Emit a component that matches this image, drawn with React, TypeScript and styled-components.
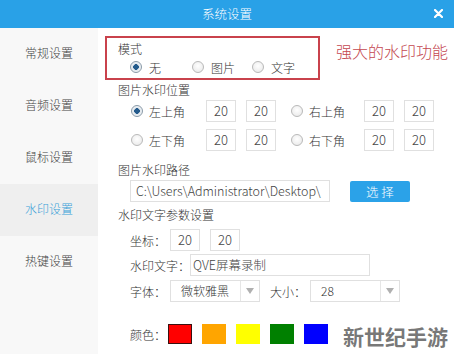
import * as React from 'react';
import styled, { createGlobalStyle, css } from 'styled-components';

const GlobalStyle = createGlobalStyle`
  html, body {
    margin: 0;
    padding: 0;
    background: #fff;
  }
  body {
    font-family: "Noto Sans CJK SC", "Noto Sans", sans-serif;
    font-size: 12px;
    font-weight: 300;
    color: #333;
  }
`;

const navItems = ['常规设置', '音频设置', '鼠标设置', '水印设置', '热键设置'];
const swatches = ['#ff0000', '#ffa500', '#ffff00', '#008000', '#0000ff'];

const App = () => {
  return <Window>
    <GlobalStyle />
    <TitleBar>
      系统设置
      <CloseButton>
        <svg width="9" height="9" viewBox="0 0 9 9">
          <path d="M1 1 L8 8 M8 1 L1 8" stroke="#fff" strokeWidth="2.2" strokeLinecap="round" />
        </svg>
      </CloseButton>
    </TitleBar>
    <Body>
      <Sidebar>
        {navItems.map((name) => (
          <NavItem key={name} active={name === '水印设置'}>{name}</NavItem>
        ))}
      </Sidebar>
      <Main>
        <ModeRow>
          <ModeBox>
            <Heading>模式</Heading>
            <RadioRow>
              <Option width={62}><Radio checked />无</Option>
              <Option width={60}><Radio />图片</Option>
              <Option><Radio />文字</Option>
            </RadioRow>
          </ModeBox>
          <Annotation>强大的水印功能</Annotation>
        </ModeRow>

        <Heading top={2}>图片水印位置</Heading>
        <PosRow top={2}>
          <PosLabel><Radio checked />左上角</PosLabel>
          <NumBox>20</NumBox>
          <NumBox>20</NumBox>
          <PosLabel right><Radio />右上角</PosLabel>
          <NumBox>20</NumBox>
          <NumBox>20</NumBox>
        </PosRow>
        <PosRow top={7}>
          <PosLabel><Radio />左下角</PosLabel>
          <NumBox>20</NumBox>
          <NumBox>20</NumBox>
          <PosLabel right><Radio />右下角</PosLabel>
          <NumBox>20</NumBox>
          <NumBox>20</NumBox>
        </PosRow>

        <Heading top={11}>图片水印路径</Heading>
        <PathRow>
          <PathInput>C:\Users\Administrator\Desktop\</PathInput>
          <BlueButton>选 择</BlueButton>
        </PathRow>

        <Heading top={5}>水印文字参数设置</Heading>
        <FieldRow top={6}>
          <FieldLabel width={40}>坐标：</FieldLabel>
          <NumBox>20</NumBox>
          <NumBox>20</NumBox>
        </FieldRow>
        <FieldRow top={3}>
          <FieldLabel width={60}>水印文字：</FieldLabel>
          <TextBox>QVE屏幕录制</TextBox>
        </FieldRow>
        <FieldRow top={4}>
          <FieldLabel width={40}>字体：</FieldLabel>
          <Select>
            <SelectValue>微软雅黑</SelectValue>
            <SelectArrow />
          </Select>
          <FieldLabel width={40}>大小：</FieldLabel>
          <Select>
            <SelectValue>28</SelectValue>
            <SelectArrow />
          </Select>
        </FieldRow>
        <FieldRow top={22}>
          <FieldLabel width={38}>颜色：</FieldLabel>
          <Swatches>
            {swatches.map((c, i) => (
              <Swatch key={c} color={c} selected={i === 0} />
            ))}
          </Swatches>
        </FieldRow>
      </Main>
    </Body>
    <SiteMark>新世纪手游</SiteMark>
  </Window>;
};

const Window = styled.div`
  position: relative;
  width: 454px;
  height: 354px;
  overflow: hidden;
  display: flex;
  flex-direction: column;
`;

const TitleBar = styled.div`
  position: relative;
  flex: none;
  height: 28px;
  line-height: 27px;
  background: #29a1e7;
  color: #fff;
  font-size: 12.5px;
  text-align: center;
`;

const CloseButton = styled.div`
  position: absolute;
  right: 11px;
  top: 9px;
  width: 9px;
  height: 9px;
  display: flex;
`;

const Body = styled.div`
  flex: 1 1 auto;
  display: flex;
`;

const Sidebar = styled.div`
  flex: none;
  width: 98px;
  background: #f8f8f8;
  display: flex;
  flex-direction: column;
`;

const NavItem = styled.div<{ active?: boolean }>`
  height: 52px;
  padding-bottom: 4px;
  box-sizing: border-box;
  display: flex;
  align-items: center;
  justify-content: center;
  font-size: 12px;
  color: #444;
  ${({ active }) => active && css`
    background: #efefef;
    color: #3a9fd8;
  `}
`;

const Main = styled.div`
  flex: 1 1 auto;
  padding: 8px 0 0 20px;
  display: flex;
  flex-direction: column;
  align-items: flex-start;
`;

const ModeRow = styled.div`
  display: flex;
  align-items: flex-start;
  margin-left: -13px;
`;

const ModeBox = styled.div`
  width: 215px;
  height: 44px;
  box-sizing: border-box;
  border: 2px solid #c9424c;
  padding: 3px 0 0 11px;
`;

const Annotation = styled.div`
  margin: 4px 0 0 16px;
  font-size: 16px;
  line-height: 22px;
  color: #c4474f;
  white-space: nowrap;
`;

const Heading = styled.div<{ top?: number }>`
  line-height: 16px;
  margin-top: ${({ top }) => top || 0}px;
  color: #333;
`;

const RadioRow = styled.div`
  display: flex;
  align-items: center;
  height: 20px;
  padding-left: 12px;
`;

const Option = styled.div<{ width?: number }>`
  display: flex;
  align-items: center;
  gap: 7px;
  width: ${({ width }) => (width ? `${width}px` : 'auto')};
  color: #333;
`;

const Radio = styled.span<{ checked?: boolean }>`
  flex: none;
  width: 12px;
  height: 12px;
  box-sizing: border-box;
  border-radius: 50%;
  border: 1px solid #b9b9b9;
  background: radial-gradient(circle at 50% 40%, #fff 0%, #e6e6e6 100%);
  ${({ checked }) => checked && css`
    border-color: #8a9aa8;
    background: radial-gradient(circle, #245b8c 0 2.6px, #dfe6ec 3px, #fff 100%);
  `}
`;

const PosRow = styled.div<{ top: number }>`
  display: flex;
  align-items: center;
  gap: 10px;
  margin-top: ${({ top }) => top}px;
  padding-left: 12px;
`;

const PosLabel = styled.div<{ right?: boolean }>`
  display: flex;
  align-items: center;
  gap: 6px;
  width: 76px;
  padding-left: 1px;
  box-sizing: border-box;
  margin-right: -10px;
  color: #333;
  ${({ right }) => right && css`
    width: 74px;
    margin-left: 4px;
  `}
`;

const NumBox = styled.div`
  flex: none;
  width: 30px;
  height: 22px;
  box-sizing: border-box;
  border: 1px solid #e0e0e0;
  background: #fff;
  font-size: 13px;
  line-height: 20px;
  text-align: center;
  color: #444;
`;

const PathRow = styled.div`
  display: flex;
  align-items: center;
  gap: 20px;
  margin-top: 2px;
  padding-left: 12px;
`;

const PathInput = styled.div`
  width: 200px;
  height: 22px;
  box-sizing: border-box;
  border: 1px solid #e0e0e0;
  padding: 0 5px;
  font-size: 12.5px;
  line-height: 20px;
  color: #444;
  white-space: nowrap;
  overflow: hidden;
`;

const BlueButton = styled.div`
  width: 60px;
  height: 21px;
  border-radius: 2px;
  background: #2ba2e8;
  color: #fff;
  font-size: 12.5px;
  line-height: 21px;
  text-align: center;
`;

const FieldRow = styled.div<{ top: number }>`
  display: flex;
  align-items: center;
  gap: 10px;
  margin-top: ${({ top }) => top}px;
  padding-left: 12px;
`;

const FieldLabel = styled.div<{ width: number }>`
  flex: none;
  width: ${({ width }) => width}px;
  margin-right: -10px;
  white-space: nowrap;
  color: #333;
`;

const TextBox = styled.div`
  width: 180px;
  height: 22px;
  box-sizing: border-box;
  border: 1px solid #e0e0e0;
  padding: 0 2px;
  font-size: 12.5px;
  line-height: 20px;
  color: #444;
`;

const Select = styled.div`
  width: 90px;
  height: 22px;
  box-sizing: border-box;
  border: 1px solid #e0e0e0;
  display: flex;
`;

const SelectValue = styled.div`
  flex: 1 1 auto;
  padding-left: 10px;
  line-height: 20px;
  color: #333;
`;

const SelectArrow = styled.div`
  flex: none;
  width: 18px;
  border-left: 1px solid #e6e6e6;
  display: flex;
  align-items: center;
  justify-content: center;
  &::after {
    content: '';
    border-left: 4px solid transparent;
    border-right: 4px solid transparent;
    border-top: 6px solid #b0b0b0;
  }
`;

const Swatches = styled.div`
  display: flex;
  gap: 10px;
`;

const Swatch = styled.div<{ color: string; selected?: boolean }>`
  width: 24px;
  height: 20px;
  box-sizing: border-box;
  background: ${({ color }) => color};
  border: 1px solid ${({ selected }) => (selected ? '#3a1010' : 'transparent')};
`;

const SiteMark = styled.div`
  position: absolute;
  right: 6px;
  bottom: 6px;
  font-size: 21px;
  font-weight: 700;
  line-height: 24px;
  color: rgba(95, 95, 95, 0.85);
  text-shadow: 0 0 2px #fff, 0 0 2px #fff;
`;

export default App;
